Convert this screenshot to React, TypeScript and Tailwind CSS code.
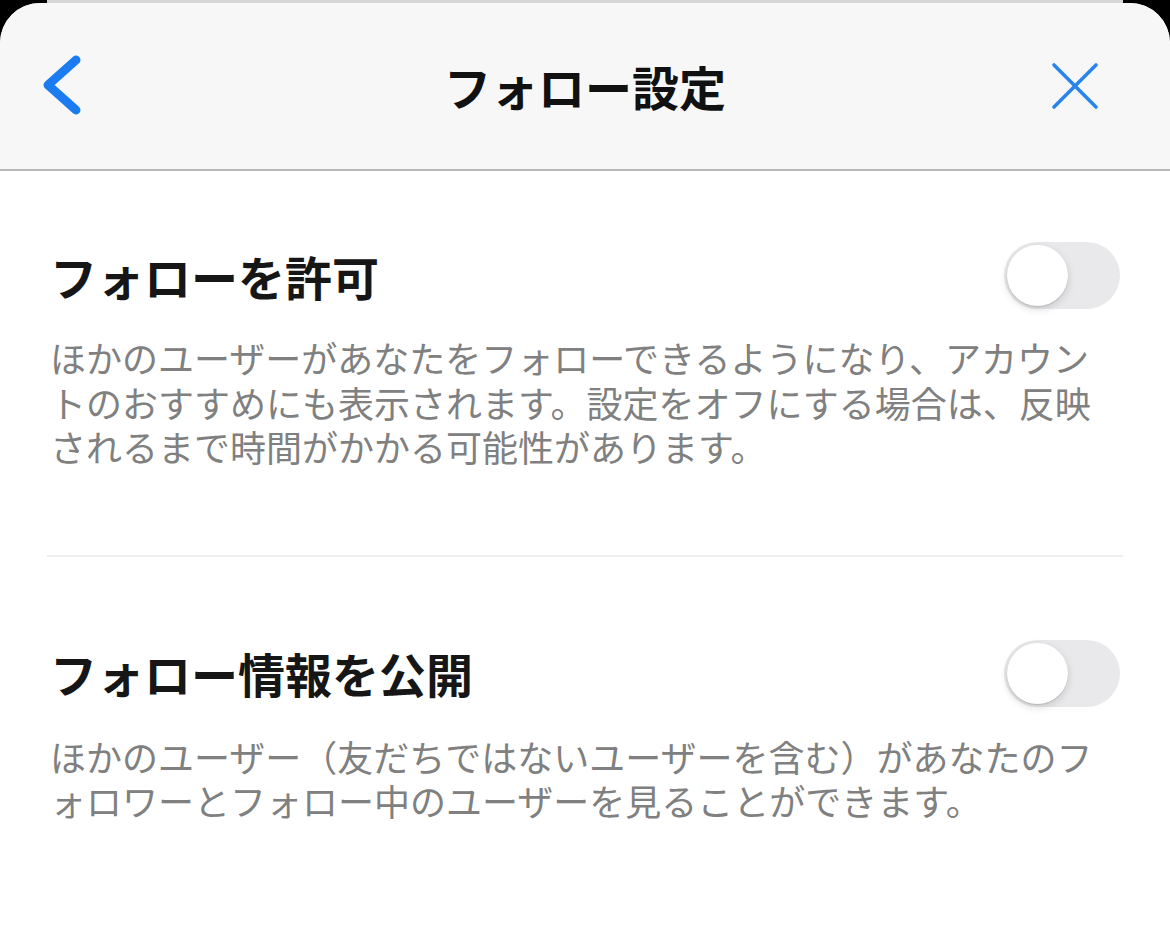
import React from "react";

const font = { fontFamily: '"Noto Sans CJK JP", "Noto Sans", sans-serif' };

function Toggle() {
  return (
    <div className="w-[116px] h-[67px] rounded-full bg-[#e9e9eb] p-[3px] flex items-center shrink-0">
      <div className="w-[61px] h-[61px] rounded-full bg-white shadow-[0_3px_8px_rgba(0,0,0,0.15),0_1px_1px_rgba(0,0,0,0.12)]" />
    </div>
  );
}

function Section({ title, lines, gapClass }: { title: string; lines: string[]; gapClass: string }) {
  return (
    <div className="flex flex-col">
      <div className="flex items-center justify-between">
        <div className="text-[47px] leading-[60px] font-bold text-[#161616] whitespace-nowrap">{title}</div>
        <Toggle />
      </div>
      <div className={`${gapClass} text-[36px] leading-[44.5px] text-[#808080] whitespace-nowrap`}>
        {lines.map((l, i) => (
          <div key={i}>{l}</div>
        ))}
      </div>
    </div>
  );
}

export default function App() {
  return (
    <div className="w-[1170px] h-[930px] bg-black flex flex-col overflow-hidden" style={font}>
      <div className="h-[3px] mx-[47px] bg-[#d6d6d6] shrink-0" />
      <div className="flex-1 bg-white rounded-t-[40px] overflow-hidden flex flex-col">
        <div className="h-[168px] bg-[#f7f7f7] border-b-2 border-[#b9b9b9] grid grid-cols-[1fr_auto_1fr] items-center px-[43px] shrink-0">
          <div className="flex items-center">
            <svg width="40" height="64" viewBox="0 0 40 64" fill="none">
              <polyline points="33,6 5,31 33,56" stroke="#1a7cf0" strokeWidth="9" strokeLinecap="round" strokeLinejoin="round" />
            </svg>
          </div>
          <div className="text-[47px] leading-[60px] font-bold text-[#111] whitespace-nowrap">フォロー設定</div>
          <div className="flex items-center justify-end pr-[28px]">
            <svg width="48" height="48" viewBox="0 0 48 48" fill="none">
              <line x1="3" y1="3" x2="45" y2="45" stroke="#2a84ec" strokeWidth="3.6" strokeLinecap="round" />
              <line x1="45" y1="3" x2="3" y2="45" stroke="#2a84ec" strokeWidth="3.6" strokeLinecap="round" />
            </svg>
          </div>
        </div>
        <div className="px-[50px] pt-[71px] flex flex-col">
          <Section
            title="フォローを許可"
            gapClass="mt-[26px]"
            lines={[
              "ほかのユーザーがあなたをフォローできるようになり、アカウン",
              "トのおすすめにも表示されます。設定をオフにする場合は、反映",
              "されるまで時間がかかる可能性があります。",
            ]}
          />
          <div className="mt-[86px] mb-[83px] h-[2px] bg-[#efefef] -mx-[3px]" />
          <Section
            title="フォロー情報を公開"
            gapClass="mt-[27px]"
            lines={[
              "ほかのユーザー（友だちではないユーザーを含む）があなたのフ",
              "ォロワーとフォロー中のユーザーを見ることができます。",
            ]}
          />
        </div>
      </div>
    </div>
  );
}
